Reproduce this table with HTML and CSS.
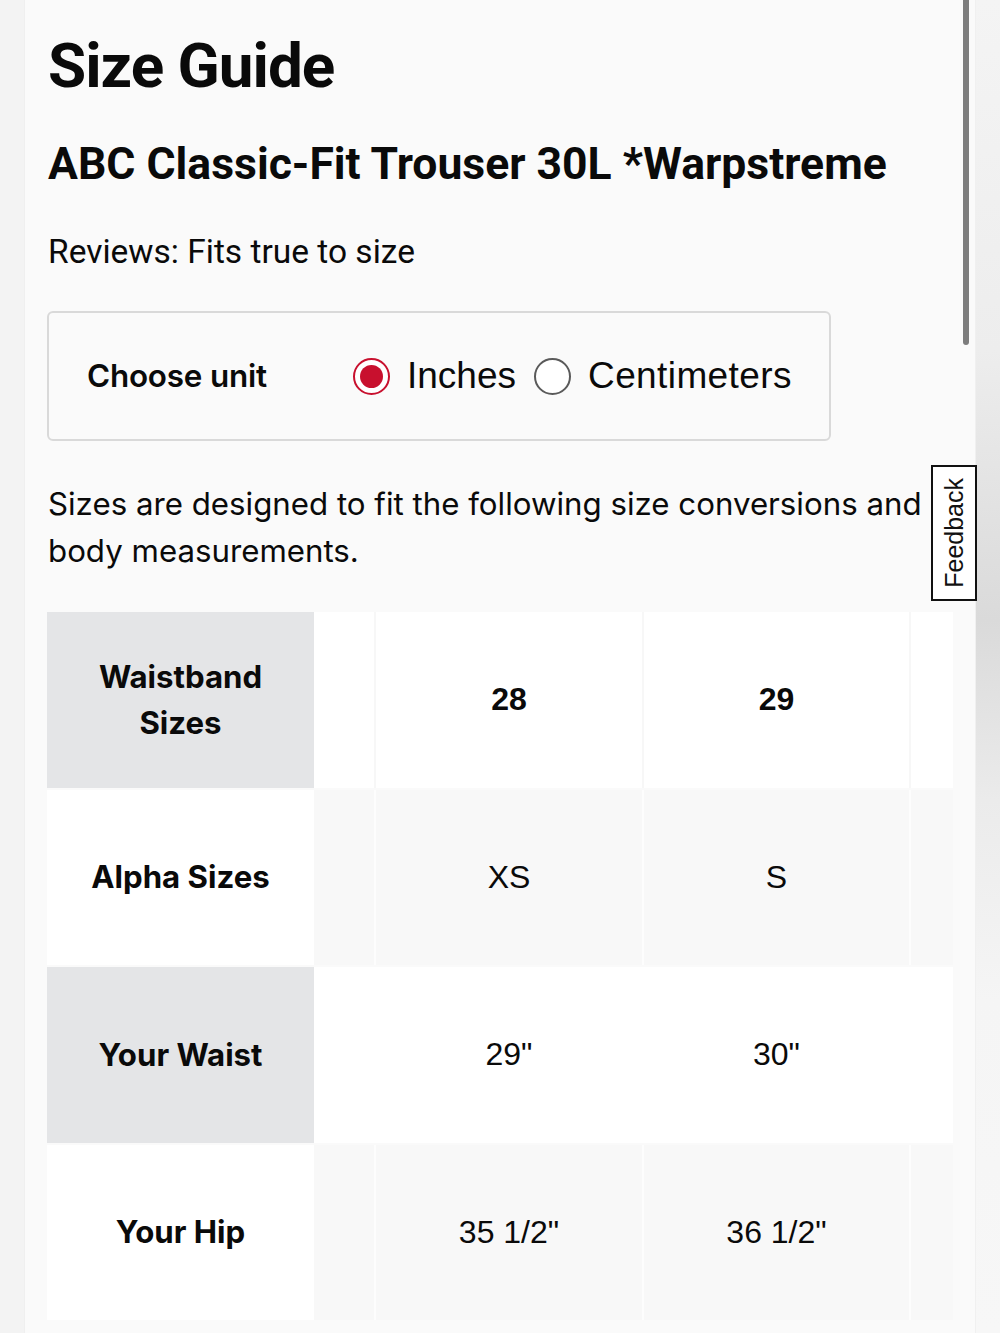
FILE: index.html
```html
<!DOCTYPE html>
<html lang="en">
<head>
<meta charset="utf-8">
<title>Size Guide</title>
<link rel="stylesheet" href="styles.css">
</head>
<body>
<div class="page">
  <div class="gutter-left"></div>
  <main class="panel">
    <h1 class="title">Size Guide</h1>
    <h2 class="product">ABC Classic-Fit Trouser 30L *Warpstreme</h2>
    <p class="reviews">Reviews: Fits true to size</p>

    <div class="unit-box">
      <span class="unit-label">Choose unit</span>
      <label class="radio">
        <span class="dot dot-on"></span>
        <span class="radio-text">Inches</span>
      </label>
      <label class="radio">
        <span class="dot"></span>
        <span class="radio-text">Centimeters</span>
      </label>
    </div>

    <p class="intro">Sizes are designed to fit the following size conversions and body measurements.</p>

    <div class="table">
      <div class="row row-a">
        <div class="head head-gray">Waistband<br>Sizes</div>
        <div class="cells">
          <div class="cell c-a"></div>
          <div class="cell c-b bold">28</div>
          <div class="cell c-c bold">29</div>
          <div class="cell c-d"></div>
        </div>
      </div>
      <div class="row row-b">
        <div class="head head-white">Alpha Sizes</div>
        <div class="cells">
          <div class="cell c-a"></div>
          <div class="cell c-b">XS</div>
          <div class="cell c-c">S</div>
          <div class="cell c-d"></div>
        </div>
      </div>
      <div class="row row-c">
        <div class="head head-gray">Your Waist</div>
        <div class="cells">
          <div class="cell c-a"></div>
          <div class="cell c-b">29"</div>
          <div class="cell c-c">30"</div>
          <div class="cell c-d"></div>
        </div>
      </div>
      <div class="row row-b">
        <div class="head head-white">Your Hip</div>
        <div class="cells">
          <div class="cell c-a"></div>
          <div class="cell c-b">35 1/2"</div>
          <div class="cell c-c">36 1/2"</div>
          <div class="cell c-d"></div>
        </div>
      </div>
    </div>
  </main>
  <div class="gutter-right"></div>
</div>

<div class="scroll-thumb"></div>
<div class="feedback"><span>Feedback</span></div>
</body>
</html>
```

FILE: styles.css
```css
html, body {
  margin: 0;
  padding: 0;
}

body {
  background: #f3f3f3;
  color: #0a0a0a;
  font-family: "Liberation Sans", Arial, sans-serif;
  width: 1000px;
  height: 1333px;
  overflow: hidden;
  position: relative;
}

.page {
  display: flex;
  height: 1333px;
}

.gutter-left {
  flex: 0 0 25px;
  background: #f3f3f3;
  border-right: 1px solid #efefef;
  box-sizing: border-box;
}

.gutter-right {
  flex: 0 0 25px;
  background: linear-gradient(to bottom, #f4f4f4 0, #ededed 350px, #dadada 620px, #ebebeb 800px, #f5f5f5 1000px, #f7f7f7 100%);
  border-left: 1px solid #f0f0f0;
  box-sizing: border-box;
}

.panel {
  flex: 0 0 950px;
  background: #fafafa;
  padding: 35px 0 0 22px;
  box-sizing: border-box;
}

.title {
  margin: 0;
  font-family: Roboto, "Liberation Sans", sans-serif;
  font-weight: 700;
  font-size: 62px;
  line-height: 62px;
  letter-spacing: -1px;
  padding-left: 1px;
}

.product {
  margin: 45px 0 0;
  font-family: Roboto, "Liberation Sans", sans-serif;
  font-weight: 700;
  font-size: 44.5px;
  line-height: 44.5px;
  padding-left: 1px;
}

.reviews {
  margin: 48px 0 0;
  font-family: Roboto, "Liberation Sans", sans-serif;
  font-weight: 400;
  font-size: 33.5px;
  line-height: 33.5px;
  padding-left: 1px;
}

.unit-box {
  margin-top: 43px;
  width: 784px;
  height: 130px;
  box-sizing: border-box;
  border: 2px solid #d9d9d9;
  border-radius: 6px;
  display: flex;
  align-items: center;
  padding-left: 38px;
}

.unit-label {
  flex: 0 0 266px;
  font-family: Inter, "Open Sans", sans-serif;
  font-weight: 600;
  font-size: 31.4px;
  letter-spacing: -0.2px;
}

.radio {
  display: flex;
  align-items: center;
  margin-right: 18px;
}

.dot {
  width: 37px;
  height: 37px;
  box-sizing: border-box;
  border-radius: 50%;
  border: 2px solid #5a5a5a;
  background: #fff;
  margin-right: 17px;
  position: relative;
}

.dot-on {
  border-color: #c8102e;
}

.dot-on::after {
  content: "";
  position: absolute;
  left: 5px;
  top: 5px;
  width: 23px;
  height: 23px;
  border-radius: 50%;
  background: #c8102e;
}

.radio-text {
  font-family: "Liberation Sans", Arial, sans-serif;
  font-size: 37px;
  line-height: 40px;
}

.radio + .radio .radio-text {
  letter-spacing: 0.4px;
}

.intro {
  margin: 40px 0 0;
  font-family: Inter, "Open Sans", sans-serif;
  font-size: 31.25px;
  line-height: 47px;
  width: 900px;
  padding-left: 1px;
}

.table {
  margin-top: 37px;
  width: 906px;
  overflow: hidden;
  display: grid;
  grid-auto-rows: 175.5px;
  row-gap: 2px;
}

.row {
  display: flex;
}

.head {
  flex: 0 0 267px;
  display: flex;
  align-items: center;
  justify-content: center;
  text-align: center;
  font-family: Inter, "Open Sans", sans-serif;
  font-weight: 700;
  font-size: 31.2px;
  line-height: 46px;
}

.head-gray {
  background: #e4e5e7;
}

.head-white {
  background: #ffffff;
}

.cells {
  display: flex;
  gap: 2px;
  flex: 1 1 auto;
}

.cell {
  display: flex;
  align-items: center;
  justify-content: center;
  font-family: "Liberation Sans", Arial, sans-serif;
  font-size: 32px;
}

.bold {
  font-weight: 700;
}

.c-a { flex: 0 0 60px; }
.c-b { flex: 0 0 266px; }
.c-c { flex: 0 0 265px; }
.c-d { flex: 0 0 266px; }

.row-a .cells { background: #f7f7f7; }
.row-a .cell { background: #ffffff; }

.row-b .cells { background: #fdfdfd; }
.row-b .cell { background: #f8f8f8; }

.row-c .cells { background: #ffffff; }
.row-c .cell { background: #ffffff; }

.scroll-thumb {
  position: absolute;
  left: 963px;
  top: 0;
  width: 6px;
  height: 345px;
  background: #7d7d7d;
  border-radius: 0 0 3px 3px;
}

.feedback {
  position: absolute;
  left: 931px;
  top: 465px;
  width: 46px;
  height: 136px;
  box-sizing: border-box;
  border: 2px solid #111;
  background: #ffffff;
  display: flex;
  align-items: center;
  justify-content: center;
}

.feedback span {
  writing-mode: vertical-rl;
  transform: rotate(180deg);
  font-family: "Liberation Sans", Arial, sans-serif;
  font-size: 25px;
  line-height: 30px;
  color: #111;
}
```
